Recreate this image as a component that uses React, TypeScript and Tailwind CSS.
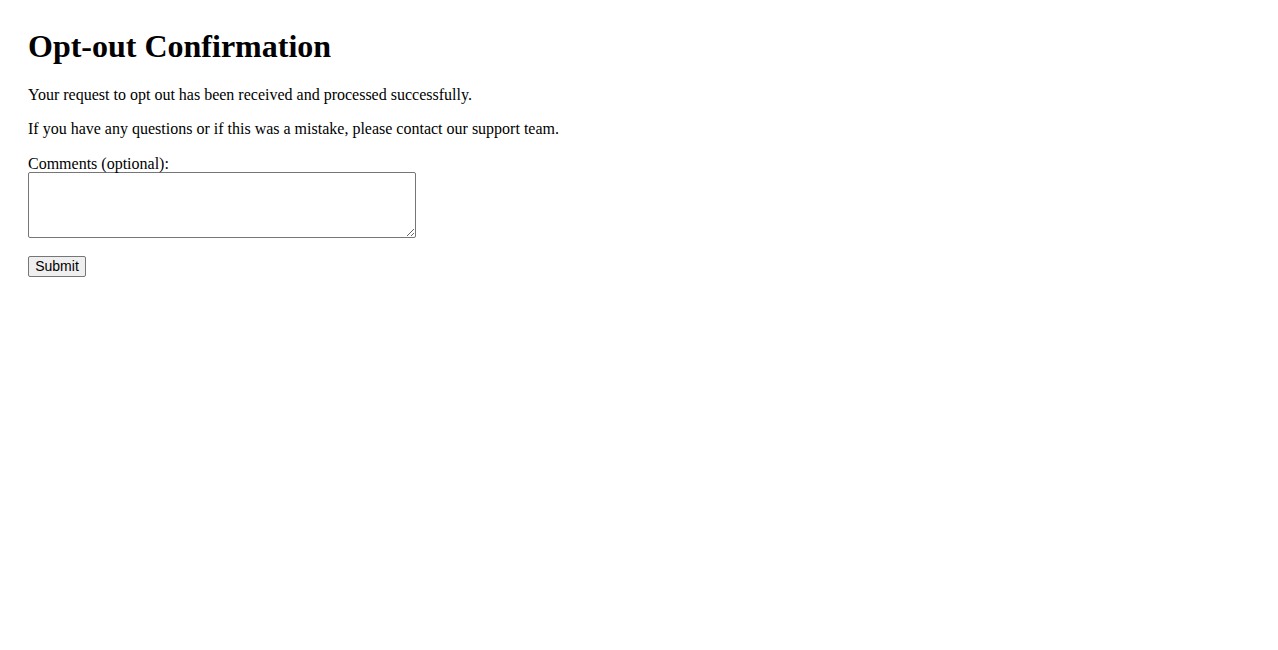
import React from 'react';

export default function App() {
  return (
    <div className="min-h-screen bg-white text-black p-[28px] font-['Liberation_Serif',serif]">
      <h1 className="text-[32px] font-bold leading-[36.8px]">Opt-out Confirmation</h1>

      <p className="mt-[21px] text-[16px] leading-[18.4px]">
        Your request to opt out has been received and processed successfully.
      </p>
      <p className="mt-[16px] text-[16px] leading-[18.4px]">
        If you have any questions or if this was a mistake, please contact our support team.
      </p>

      <form className="mt-[16px]" onSubmit={(e) => e.preventDefault()}>
        <label htmlFor="comments" className="block text-[16px] leading-[17px]">
          Comments (optional):
        </label>
        <textarea
          id="comments"
          className="block w-[388px] h-[66px] border border-[#767676] rounded-[2px] bg-white p-[2px] font-['Liberation_Mono',monospace] text-[13px]"
        />
        <button
          type="submit"
          className="block mt-[18px] w-[58px] h-[21px] px-[6px] text-center border border-[#767676] rounded-[2px] bg-[#efefef] text-[14px] leading-[17px] font-['Liberation_Sans',Arial,sans-serif]"
        >
          Submit
        </button>
      </form>
    </div>
  );
}
